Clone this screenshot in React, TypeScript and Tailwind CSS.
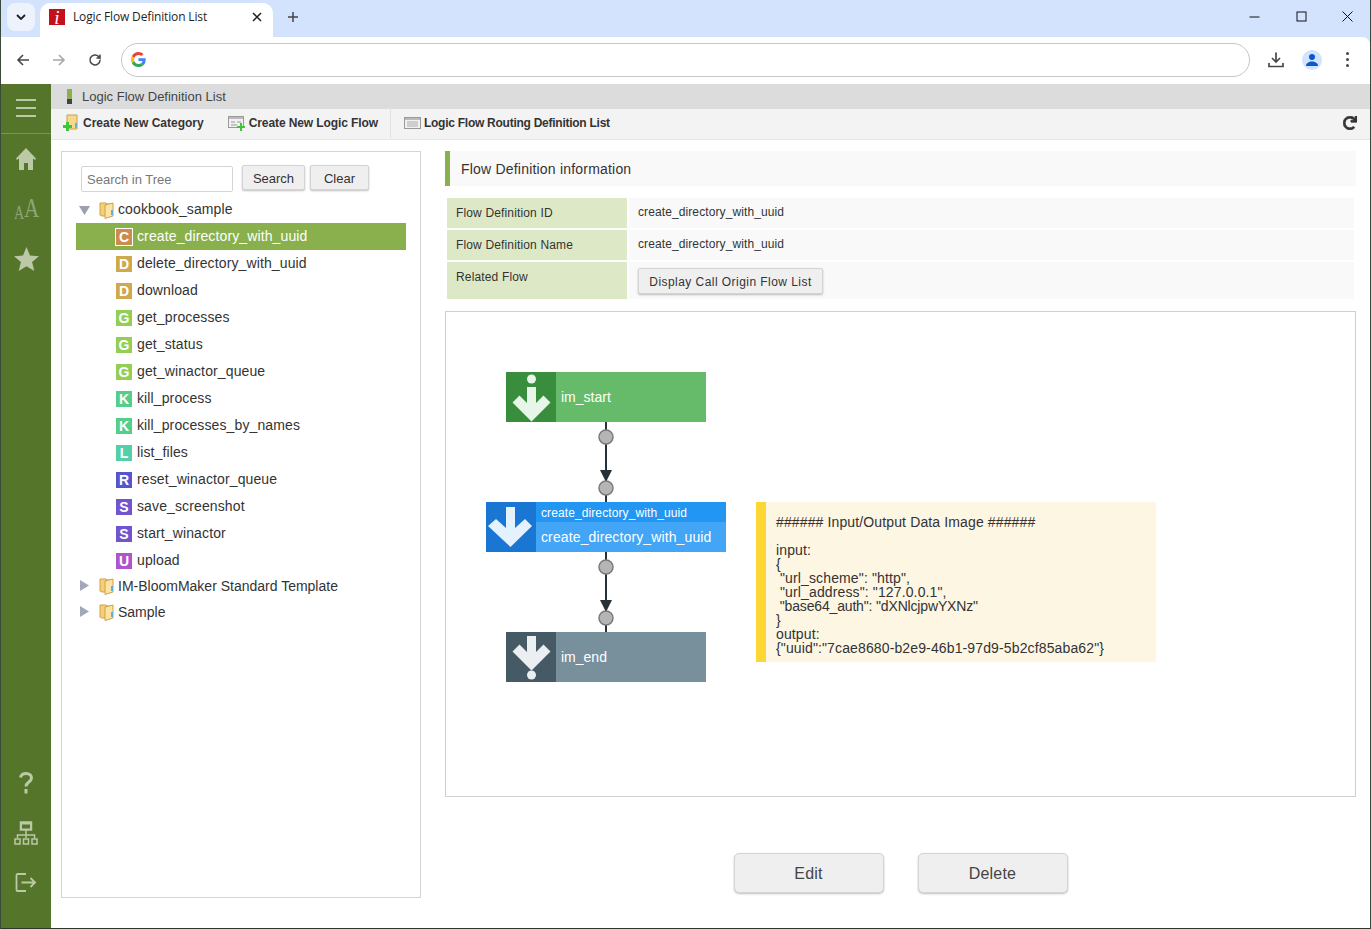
import React from 'react';
import { FaRedo } from 'react-icons/fa';

const treeItems = [
  { letter: 'C', color: 'bg-[#cc8b4f]', name: 'create_directory_with_uuid', selected: true },
  { letter: 'D', color: 'bg-[#cfa94f]', name: 'delete_directory_with_uuid' },
  { letter: 'D', color: 'bg-[#cfa94f]', name: 'download' },
  { letter: 'G', color: 'bg-[#93cf54]', name: 'get_processes' },
  { letter: 'G', color: 'bg-[#93cf54]', name: 'get_status' },
  { letter: 'G', color: 'bg-[#93cf54]', name: 'get_winactor_queue' },
  { letter: 'K', color: 'bg-[#54cf8b]', name: 'kill_process' },
  { letter: 'K', color: 'bg-[#54cf8b]', name: 'kill_processes_by_names' },
  { letter: 'L', color: 'bg-[#54cfa9]', name: 'list_files' },
  { letter: 'R', color: 'bg-[#5455cf]', name: 'reset_winactor_queue' },
  { letter: 'S', color: 'bg-[#7354cf]', name: 'save_screenshot' },
  { letter: 'S', color: 'bg-[#7354cf]', name: 'start_winactor' },
  { letter: 'U', color: 'bg-[#af54cf]', name: 'upload' },
];

const noteBefore = `###### Input/Output Data Image ######

input:
{
 "url_scheme": "http",
 "url_address": "127.0.0.1",`;
const noteAuth = ` "base64_auth": "dXNlcjpwYXNz"`;
const noteAfter = `}
output:
{"uuid":"7cae8680-b2e9-46b1-97d9-5b2cf85aba62"}`;

const FolderIcon = () => (
  <svg width="16" height="18" viewBox="0 0 16 18" className="shrink-0">
    <path d="M1 2h6l1 1h5v12H3l-2-1z" fill="#f5cf77" stroke="#d3a144" />
    <path d="M6 4l8-2v13l-8 2.500z" fill="#fbe3a6" stroke="#d3a144" />
    <rect x="12" y="9" width="2" height="5" fill="#5fb0dc" />
  </svg>
);

const Caret = ({ open }: { open?: boolean }) => (
  <svg width="12" height="12" viewBox="0 0 12 12" className="shrink-0">
    {open ? <path d="M0 2h11L5.500 11z" fill="#9aa0b0" /> : <path d="M1 0l9 5.500L1 11z" fill="#a3a8b8" />}
  </svg>
);

const GoogleG = () => (
  <svg width="15" height="15" viewBox="0 0 48 48">
    <path fill="#EA4335" d="M24 9.500c3.500 0 6.700 1.200 9.200 3.600l6.900-6.900C35.900 2.400 30.500 0 24 0 14.600 0 6.500 5.400 2.600 13.200l8 6.200C12.500 13.700 17.800 9.500 24 9.500z" />
    <path fill="#4285F4" d="M46.900 24.500c0-1.600-.1-3.100-.4-4.500H24v9h12.900c-.6 3-2.200 5.500-4.700 7.200l7.700 6c4.500-4.200 7-10.300 7-17.700z" />
    <path fill="#FBBC05" d="M10.600 28.600c-.5-1.400-.8-3-.8-4.600s.3-3.200.8-4.600l-8-6.200C.9 16.500 0 20.100 0 24s.9 7.500 2.600 10.800l8-6.200z" />
    <path fill="#34A853" d="M24 48c6.500 0 11.900-2.100 15.900-5.800l-7.700-6c-2.200 1.500-4.900 2.300-8.200 2.300-6.200 0-11.500-4.200-13.400-9.900l-8 6.200C6.500 42.600 14.600 48 24 48z" />
  </svg>
);

const Button = ({ children, className }: { children: React.ReactNode; className: string }) => (
  <div className={`flex items-center justify-center border border-[#d4d4d4] bg-[#efefef] shadow-[0_1px_2px_rgba(0,0,0,0.25)] ${className}`}>
    {children}
  </div>
);

const BrowserChrome = () => (
  <div className="shrink-0 bg-[#d3e3fd]">
    <div className="flex h-[37px]">
      <div className="ml-[6px] mt-[3px] flex h-[28px] w-[28px] items-center justify-center rounded-[8px] bg-[#edf2fc]">
        <svg width="10" height="6" viewBox="0 0 10 6"><path d="M1 1l4 4 4-4" fill="none" stroke="#1f1f1f" strokeWidth="1.800" /></svg>
      </div>
      <div className="ml-[5px] mt-[3px] flex h-[34px] w-[233px] items-center rounded-t-[10px] bg-white pb-[6px] pl-[9px]">
        <div className="flex h-[16px] w-[16px] items-center justify-center bg-[#c4101c] font-['Liberation_Serif',serif] text-[19px] italic leading-none text-white">i</div>
        <span className="ml-[8px] font-['Open_Sans',sans-serif] text-[12px] tracking-[-0.15px] text-[#1f1f1f]">Logic Flow Definition List</span>
        <svg width="10" height="10" viewBox="0 0 10 10" className="ml-auto mr-[11px]"><path d="M1 1l8 8M9 1l-8 8" stroke="#1f1f1f" strokeWidth="1.500" /></svg>
      </div>
      <svg width="12" height="12" viewBox="0 0 12 12" className="ml-[14px] mt-[11px]"><path d="M6 1v10M1 6h10" stroke="#444" strokeWidth="1.500" /></svg>
      <div className="ml-auto mr-[17px] mt-[11px] flex items-start">
        <svg width="11" height="11" viewBox="0 0 11 11"><path d="M0.500 6h10" stroke="#111" /></svg>
        <svg width="11" height="11" viewBox="0 0 11 11" className="ml-[36px]"><rect x="1" y="1" width="9" height="9" fill="none" stroke="#111" /></svg>
        <svg width="11" height="11" viewBox="0 0 11 11" className="ml-[35px]"><path d="M0.500 0.500l10 10M10.500 0.500l-10 10" stroke="#111" /></svg>
      </div>
    </div>
    <div className="flex h-[47px] items-center rounded-tr-[8px] bg-white pb-[2px]">
      <svg width="14" height="14" viewBox="0 0 14 14" className="ml-[15px]"><path d="M13 7H2M7 2L2 7l5 5" fill="none" stroke="#474747" strokeWidth="1.600" /></svg>
      <svg width="14" height="14" viewBox="0 0 14 14" className="ml-[22px]"><path d="M1 7h11M7 2l5 5-5 5" fill="none" stroke="#a8a8a8" strokeWidth="1.600" /></svg>
      <svg width="14" height="14" viewBox="0 0 14 14" className="ml-[22px]"><path d="M12 7a5 5 0 1 1-1.500-3.600L12 5V1.500M12 5H8.500" fill="none" stroke="#474747" strokeWidth="1.500" /></svg>
      <div className="ml-[19px] flex h-[34px] w-[1129px] items-center rounded-full border border-[#c4c7c5] pl-[9px]">
        <GoogleG />
      </div>
      <svg width="16" height="16" viewBox="0 0 16 16" className="ml-[18px]"><path d="M8 0.500v9M4 6l4 4 4-4M1 11v3.500h14V11" fill="none" stroke="#474747" strokeWidth="1.700" /></svg>
      <div className="ml-[18px] flex h-[20px] w-[20px] items-center justify-center rounded-full bg-[#d3e3fd]">
        <svg width="14" height="14" viewBox="0 0 14 14"><circle cx="7" cy="4" r="3" fill="#0b57d0" /><path d="M1 13c0-3 3-4.500 6-4.500s6 1.500 6 4.500z" fill="#0b57d0" /></svg>
      </div>
      <div className="ml-[24px] flex flex-col gap-[3px]">
        <span className="h-[3px] w-[3px] rounded-full bg-[#474747]" />
        <span className="h-[3px] w-[3px] rounded-full bg-[#474747]" />
        <span className="h-[3px] w-[3px] rounded-full bg-[#474747]" />
      </div>
    </div>
  </div>
);

const Sidebar = () => (
  <div className="flex w-[50px] shrink-0 flex-col items-center bg-[#55752a] text-[#bbc9a6]">
    <div className="flex h-[50px] w-full items-center justify-center border-b border-[#7a9454] pb-[1px]">
      <div className="flex flex-col gap-[6px]">
        <span className="block h-[2px] w-[20px] bg-[#bbc9a6]" />
        <span className="block h-[2px] w-[20px] bg-[#bbc9a6]" />
        <span className="block h-[2px] w-[20px] bg-[#bbc9a6]" />
      </div>
    </div>
    <svg width="20" height="22" viewBox="0 0 20 22" className="mt-[14px]">
      <path d="M10 0L0 10.500l1 1.500 2-1.500V22h5v-7h4v7h5V10.500l2 1.500 1-1.500z" fill="#bbc9a6" />
    </svg>
    <div className="mt-[28px] flex h-[24px] w-[25px] items-end font-['Liberation_Serif',serif] leading-none text-[#8fa674]">
      <span className="block w-[10px] origin-left scale-x-[0.78] text-[18px]">A</span>
      <span className="block w-[15px] origin-left scale-x-[0.78] text-[27px]">A</span>
    </div>
    <svg width="25" height="24" viewBox="0 0 25 24" className="mt-[25px]">
      <path d="M12.500 0l3.500 8.500 9 .7-6.900 5.800 2.200 9-7.800-4.800-7.800 4.800 2.200-9L0 9.200l9-.7z" fill="#bbc9a6" />
    </svg>
    <div className="mt-auto flex flex-col items-center">
      <svg width="14" height="22" viewBox="0 0 14 22" fill="none" stroke="#bbc9a6" strokeWidth="3">
        <path d="M1.500 5.500C2 3 4 1.500 7 1.500c3.200 0 5.500 1.800 5.500 4.500 0 4-5.500 4-5.500 8.500" />
        <path d="M7 17v4.500" />
      </svg>
      <svg width="24" height="24" viewBox="0 0 24 24" className="mt-[27px]" fill="none" stroke="#bbc9a6" strokeWidth="1.500">
        <rect x="6.500" y="1" width="11" height="8" fill="#bbc9a6" />
        <rect x="8" y="3.500" width="8" height="4" fill="#55752a" stroke="none" />
        <path d="M12 9v5M3.500 17v-3h17v3M12 14v3" />
        <rect x="1" y="18" width="5" height="5" />
        <rect x="9.500" y="18" width="5" height="5" />
        <rect x="18" y="18" width="5" height="5" />
      </svg>
      <svg width="22" height="22" viewBox="0 0 22 22" className="mb-[34px] mt-[27px]" fill="none" stroke="#bbc9a6" strokeWidth="1.800">
        <path d="M11 2H2.500a1 1 0 0 0-1 1v15a1 1 0 0 0 1 1H11M6.500 10.500H20M15.500 6l4.500 4.500-4.500 4.500" />
      </svg>
    </div>
  </div>
);

const TreePanel = () => (
  <div className="h-[747px] w-[360px] shrink-0 border border-[#d4d4d4] pl-[14px] pt-[13px] font-['Liberation_Sans',sans-serif] text-[14px] tracking-[0.12px] text-[#333]">
    <div className="flex items-start pl-[5px] text-[13px] tracking-normal">
      <div className="mt-[1px] flex h-[26px] w-[152px] items-center rounded-[2px] border border-[#d4d4d4] pl-[5px] pt-[1px] text-[#777]">Search in Tree</div>
      <Button className="ml-[9px] h-[25px] w-[63px] rounded-[2px] pt-[2px] text-[#333]">Search</Button>
      <Button className="ml-[5px] h-[25px] w-[59px] rounded-[2px] pt-[2px] text-[#333]">Clear</Button>
    </div>
    <div className="flex h-[31px] items-center pl-[3px] pt-[4px]">
      <Caret open />
      <span className="ml-[8px]"><FolderIcon /></span>
      <span className="ml-[3px]">cookbook_sample</span>
    </div>
    {treeItems.map((item) => (
      <div key={item.name} className={`flex h-[27px] w-[330px] items-center pl-[40px] ${item.selected ? 'bg-[#8ab04e] text-white' : ''}`}>
        <span className={`flex h-[16px] w-[16px] items-center justify-center text-[14px] font-bold leading-none tracking-normal text-white ${item.color} ${item.selected ? 'outline outline-1 outline-white' : ''}`}>{item.letter}</span>
        <span className="ml-[5px]">{item.name}</span>
      </div>
    ))}
    <div className="-mt-[1px] tracking-normal">
      {['IM-BloomMaker Standard Template', 'Sample'].map((name) => (
        <div key={name} className="flex h-[26px] items-center pl-[3px]">
          <Caret />
          <span className="ml-[8px]"><FolderIcon /></span>
          <span className="ml-[3px]">{name}</span>
        </div>
      ))}
    </div>
  </div>
);

const InfoRow = ({ label, children, tall }: { label: string; children: React.ReactNode; tall?: boolean }) => (
  <div className={`flex gap-[2px] ${tall ? 'h-[37px]' : 'h-[30px]'}`}>
    <div className="w-[180px] bg-[#dde9c6] pl-[9px] pt-[6px] text-[12px] tracking-[0.15px] text-[#333]">{label}</div>
    <div className={`flex-1 bg-[#f9f9f9] pl-[9px] text-[12px] tracking-[0.1px] text-[#333] ${tall ? 'pt-[6px]' : 'pt-[5px]'}`}>{children}</div>
  </div>
);

const Connector = ({ top }: { top: number }) => (
  <svg width="20" height="80" viewBox="0 0 20 80" className="absolute left-[150px]" style={{ top }}>
    <path d="M10 0v80" stroke="#263238" strokeWidth="2" />
    <path d="M4 48h12l-6 12z" fill="#263238" />
    <circle cx="10" cy="15" r="7" fill="#b5b5b5" stroke="#7a7a7a" strokeWidth="1.500" />
    <circle cx="10" cy="66" r="7" fill="#b5b5b5" stroke="#7a7a7a" strokeWidth="1.500" />
  </svg>
);

const Arrow = ({ dot, top }: { dot?: boolean; top?: boolean }) => (
  <svg width="50" height="50" viewBox="0 0 50 50" className="block">
    {dot && top && <circle cx="25.500" cy="7" r="4.500" fill="#e8f5e9" />}
    {dot && !top && <circle cx="25.500" cy="43" r="4.500" fill="#eceff1" />}
    <path
      d={top ? 'M21 15h9v16l7.500-7.500 7 7L25.500 49.500 6.500 30.500l7-7L21 31z' : dot ? 'M21 4h9v16l7.500-7.500 7 7L25.500 38.500 6.500 19.500l7-7L21 20z' : 'M20 5h9v21l10-9 7 7-21.500 21L2 24l8-7 10 9z'}
      fill={top ? '#e8f5e9' : dot ? '#eceff1' : '#e3f2fd'}
    />
  </svg>
);

const FlowCanvas = () => (
  <div className="relative mt-[12px] h-[486px] border border-[#cfcfcf] font-['Liberation_Sans',sans-serif] text-white">
    <Connector top={110} />
    <Connector top={240} />
    <div className="absolute left-[60px] top-[60px] flex h-[50px] w-[200px] bg-[#66bb6a]">
      <div className="bg-[#388e3c]"><Arrow dot top /></div>
      <span className="ml-[5px] self-center text-[14px]">im_start</span>
    </div>
    <div className="absolute left-[40px] top-[190px] flex h-[50px] w-[240px] bg-[#42a5f5]">
      <div className="bg-[#1976d2]"><Arrow /></div>
      <div className="flex-1">
        <div className="flex h-[20px] items-center bg-[#2196f3] pl-[5px] pt-[1px] text-[12px] tracking-[0.1px]">create_directory_with_uuid</div>
        <div className="flex h-[30px] items-center pl-[5px] text-[14px] tracking-[0.12px]">create_directory_with_uuid</div>
      </div>
    </div>
    <div className="absolute left-[60px] top-[320px] flex h-[50px] w-[200px] bg-[#78909c]">
      <div className="bg-[#455a64]"><Arrow dot /></div>
      <span className="ml-[5px] self-center text-[14px]">im_end</span>
    </div>
    <div className="absolute left-[310px] top-[190px] h-[160px] w-[400px] border-l-[10px] border-[#fdd835] bg-[#fdf6e3] pl-[10px] pt-[13px] font-['Liberation_Sans',sans-serif] text-[14px] leading-[14px] tracking-[0.13px] text-[#333]">
      <pre className="font-['Liberation_Sans',sans-serif]">{noteBefore}</pre>
      <pre className="font-['Liberation_Sans',sans-serif] tracking-[-0.16px]">{noteAuth}</pre>
      <pre className="font-['Liberation_Sans',sans-serif]">{noteAfter}</pre>
    </div>
  </div>
);

export default function App() {
  return (
    <div className="flex h-[929px] w-[1371px] flex-col overflow-hidden border-x border-[#3a4a3a] bg-white font-['Liberation_Sans',sans-serif]">
      <BrowserChrome />
      <div className="flex flex-1 border-b border-[#30352a]">
        <Sidebar />
        <div className="flex flex-1 flex-col">
          <div className="flex h-[25px] shrink-0 items-center bg-[#dcdcdc] pl-[16px] text-[13px] text-[#444]">
            <span className="flex h-[15px] w-[5px] flex-col">
              <span className="h-[10px] bg-[#8ab04e]" />
              <span className="h-[5px] bg-[#444]" />
            </span>
            <span className="ml-[10px]">Logic Flow Definition List</span>
          </div>
          <div className="flex h-[31px] shrink-0 items-center border-b border-[#e6e6e6] bg-[#f3f3f3] pb-[3px] text-[12px] font-bold text-[#333]">
            <svg width="17" height="17" viewBox="0 0 17 17" className="ml-[12px]">
              <path d="M4 1h10v14H4z" fill="#f7d98b" stroke="#c9a04e" />
              <rect x="12" y="9" width="2" height="5" fill="#5fb0dc" />
              <path d="M3 8v3H0v3h3v3h3v-3h3v-3H6V8z" fill="#3fc43a" />
            </svg>
            <span className="ml-[3px]">Create New Category</span>
            <svg width="18" height="16" viewBox="0 0 18 16" className="ml-[24px]">
              <rect x="0.500" y="1.500" width="15" height="11" fill="#f1f1f1" stroke="#999" />
              <path d="M1 2h14v2H1z" fill="#bbb" />
              <path d="M3 7h4M9 7h4M3 10h6" stroke="#999" />
              <path d="M12 8v3H9v2h3v3h2v-3h3v-2h-3V8z" fill="#3fc43a" />
            </svg>
            <span className="ml-[3px] tracking-[-0.1px]">Create New Logic Flow</span>
            <span className="ml-[12px] h-[31px] w-px bg-[#e0e0e0]" />
            <svg width="17" height="14" viewBox="0 0 17 14" className="ml-[13px]">
              <rect x="0.500" y="1.500" width="16" height="11" fill="#f1f1f1" stroke="#999" />
              <path d="M1 2h15v2H1z" fill="#bbb" />
              <path d="M3 6h11M3 8h11M3 10h11" stroke="#aaa" />
            </svg>
            <span className="ml-[3px] tracking-[-0.26px]">Logic Flow Routing Definition List</span>
            <FaRedo className="ml-auto mr-[13px] stroke-current stroke-[30] text-[14px]" />
          </div>
          <div className="flex flex-1 pl-[10px] pt-[11px]">
            <TreePanel />
            <div className="ml-[24px] w-[911px]">
              <div className="flex h-[35px] items-center border-l-[5px] border-[#8ab04e] bg-[#f9f9f9] pl-[11px] pt-[1px] text-[14px] tracking-[0.2px] text-[#333]">Flow Definition information</div>
              <div className="mx-[2px] mt-[12px] flex flex-col gap-[2px]">
                <InfoRow label="Flow Definition ID">create_directory_with_uuid</InfoRow>
                <InfoRow label="Flow Definition Name">create_directory_with_uuid</InfoRow>
                <InfoRow label="Related Flow" tall>
                  <Button className="h-[26px] w-[185px] rounded-[2px] pt-[1px] text-[12px] tracking-[0.45px] text-[#333]">Display Call Origin Flow List</Button>
                </InfoRow>
              </div>
              <FlowCanvas />
              <div className="mt-[56px] flex justify-center gap-[34px] text-[16px] tracking-[0.2px] text-[#444]">
                <Button className="h-[40px] w-[150px] rounded-[5px] pt-[1px]">Edit</Button>
                <Button className="h-[40px] w-[150px] rounded-[5px] pt-[1px]">Delete</Button>
              </div>
            </div>
          </div>
        </div>
      </div>
    </div>
  );
}
